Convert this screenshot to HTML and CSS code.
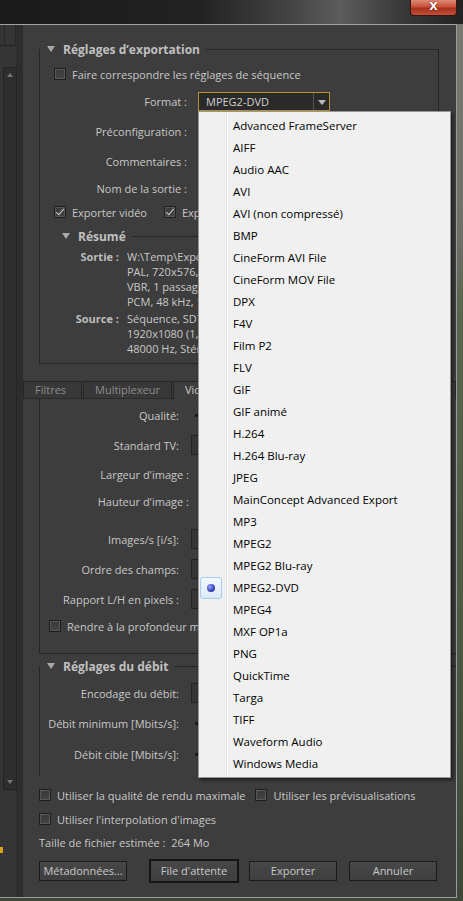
FILE: index.html
```html
<html>

<head>
  <title>Réglages d'exportation</title>
  <link rel="stylesheet" href="styles.css">
</head>

<body>
  <div class="desk">
    <div class="close">X</div>
  </div>

  <div class="win">
    <div class="side">
      <div class="side-cells"><span></span><span></span></div>
      <div class="side-scroll">
        <div class="arrow up"></div>
        <div class="track"></div>
        <div class="arrow down"></div>
      </div>
      <div class="side-foot"><span class="mark"></span></div>
    </div>

    <div class="main">
      <div class="export">
        <div class="group">
          <div class="group-title"><span class="tri"></span><b>Réglages d’exportation</b><span class="rule"></span></div>
          <div class="check-row first"><span class="box"></span>Faire correspondre les réglages de séquence</div>

          <div class="row format">
            <span class="lbl">Format :</span>
            <div class="select">
              <span>MPEG2-DVD</span>
              <span class="sel-arrow"></span>
              <ul class="popup">
                <li>Advanced FrameServer</li>
                <li>AIFF</li>
                <li>Audio AAC</li>
                <li>AVI</li>
                <li>AVI (non compressé)</li>
                <li>BMP</li>
                <li>CineForm AVI File</li>
                <li>CineForm MOV File</li>
                <li>DPX</li>
                <li>F4V</li>
                <li>Film P2</li>
                <li>FLV</li>
                <li>GIF</li>
                <li>GIF animé</li>
                <li>H.264</li>
                <li>H.264 Blu-ray</li>
                <li>JPEG</li>
                <li>MainConcept Advanced Export</li>
                <li>MP3</li>
                <li>MPEG2</li>
                <li>MPEG2 Blu-ray</li>
                <li class="on"><span class="radio"><i></i></span>MPEG2-DVD</li>
                <li>MPEG4</li>
                <li>MXF OP1a</li>
                <li>PNG</li>
                <li>QuickTime</li>
                <li>Targa</li>
                <li>TIFF</li>
                <li>Waveform Audio</li>
                <li>Windows Media</li>
              </ul>
            </div>
          </div>
          <div class="row preset"><span class="lbl">Préconfiguration :</span></div>
          <div class="row comments"><span class="lbl">Commentaires :</span></div>
          <div class="row outname"><span class="lbl">Nom de la sortie :</span></div>

          <div class="check-row exports">
            <span class="item"><span class="box on"></span>Exporter vidéo</span>
            <span class="item"><span class="box on"></span>Exporter audio</span>
          </div>

          <div class="sub-title"><span class="tri"></span><b>Résumé</b><span class="rule"></span></div>
          <div class="summary">
            <div class="sum-block">
              <b>Sortie :</b>
              <div>W:\Temp\Export.m2v<br>PAL, 720x576, 25 i/s<br>VBR, 1 passage<br>PCM, 48 kHz, 16 bits</div>
            </div>
            <div class="sum-block">
              <b>Source :</b>
              <div>Séquence, SD720<br>1920x1080 (1,0)<br>48000 Hz, Stéréo</div>
            </div>
          </div>
        </div>
      </div>

      <div class="tabs">
        <span class="tab">Filtres</span>
        <span class="tab">Multiplexeur</span>
        <span class="tab active">Vidéo</span>
      </div>

      <div class="tab-body">
        <div class="vgroup">
          <div class="row r-qual"><span class="lbl">Qualité:</span><span class="dot"></span></div>
          <div class="row r-tv"><span class="lbl">Standard TV:</span><span class="field"></span></div>
          <div class="row r-w"><span class="lbl wide">Largeur d'image :</span></div>
          <div class="row r-h"><span class="lbl wide">Hauteur d'image :</span></div>
          <div class="row r-fps"><span class="lbl">Images/s [i/s]:</span><span class="field"></span></div>
          <div class="row r-field"><span class="lbl">Ordre des champs:</span><span class="field"></span></div>
          <div class="row r-par"><span class="lbl">Rapport L/H en pixels :</span><span class="field"></span></div>
          <div class="check-row r-depth"><span class="box"></span>Rendre à la profondeur maximale</div>
        </div>
        <div class="dgroup">
          <div class="sub-title debit"><span class="tri"></span><b>Réglages du débit</b><span class="rule"></span></div>
          <div class="row r-enc"><span class="lbl">Encodage du débit:</span><span class="field"></span></div>
          <div class="row r-min"><span class="lbl">Débit minimum [Mbits/s]:</span><span class="dot"></span></div>
          <div class="row r-tgt"><span class="lbl">Débit cible [Mbits/s]:</span><span class="dot"></span></div>
        </div>
      </div>

      <div class="bottom">
        <div class="check-line first">
          <span class="item"><span class="box"></span>Utiliser la qualité de rendu maximale</span>
          <span class="item second"><span class="box"></span>Utiliser les prévisualisations</span>
        </div>
        <div class="check-line"><span class="item"><span class="box"></span>Utiliser l'interpolation d'images</span></div>
        <div class="size">Taille de fichier estimée :&nbsp; 264 Mo</div>
        <div class="buttons">
          <span class="btn">Métadonnées...</span>
          <span class="btn default">File d'attente</span>
          <span class="btn">Exporter</span>
          <span class="btn">Annuler</span>
        </div>
      </div>
    </div>
  </div>
</body>

</html>
```

FILE: styles.css
```css
body {
  margin: 0;
  width: 463px;
  height: 901px;
  overflow: hidden;
  font-family: "Open Sans", "DejaVu Sans", sans-serif;
  font-size: 11px;
  color: #c8c8c8;
  background: linear-gradient(180deg, #7a7a72 0, #6f6f68 240px, #5b6650 300px, #4d5a44 600px, #3e4738 901px);
}

.desk {
  height: 24px;
  background: linear-gradient(90deg, #1a1a1a 0, #222 200px, #444 290px, #5c5c5c 340px, #3a3a3a 400px, #222 463px);
  display: flex;
  justify-content: flex-end;
  padding-right: 6px;
}

.close {
  width: 45px;
  height: 15px;
  border: 1px solid #3a1410;
  border-top: none;
  border-radius: 0 0 4px 4px;
  background: linear-gradient(180deg, #e08a78 0, #c8523a 45%, #a8301c 55%, #c0503a 100%);
  color: #fff;
  font-family: "DejaVu Sans", sans-serif;
  font-weight: bold;
  font-size: 11px;
  line-height: 14px;
  text-align: center;
  text-shadow: 0 0 2px #501008;
}

.win {
  width: 456px;
  height: 872px;
  border-top: 1px solid #a4a4a4;
  border-right: 1px solid #9a9a9a;
  border-bottom: 1px solid #9a9a9a;
  background: #3d3d3d;
  display: flex;
}

/* colonne de gauche */
.side {
  width: 16px;
  background: #353535;
  border-right: 7px solid #2d2d2d;
  display: flex;
  flex-direction: column;
}

.side-cells {
  height: 20px;
  display: flex;
  border-bottom: 1px solid #262626;
}

.side-cells span {
  border-right: 1px solid #262626;
  width: 4px;
}

.side-cells span + span {
  width: 10px;
}

.side-scroll {
  margin: 21px 0 0 3px;
  width: 12px;
  height: 721px;
  background: #2e2e2e;
  border: 1px solid #242424;
  display: flex;
  flex-direction: column;
}

.side-scroll .track {
  flex: 1;
}

.arrow {
  height: 14px;
  position: relative;
}

.arrow::after {
  content: "";
  position: absolute;
  left: 3px;
  top: 5px;
  border: 3px solid transparent;
}

.arrow.up::after {
  border-bottom: 4px solid #777;
  top: 2px;
}

.arrow.down::after {
  border-top: 4px solid #777;
}

.side-foot {
  flex: 1;
  position: relative;
}

.mark {
  position: absolute;
  left: 0;
  top: 57px;
  width: 3px;
  height: 6px;
  background: #d8a020;
}

.main {
  flex: 1;
  min-width: 0;
  display: flex;
  flex-direction: column;
}

/* groupes */
.export {
  flex-shrink: 0;
  height: 330px;
  padding: 24px 17px 0 16px;
}

.group {
  display: flow-root;
  border-left: 1px solid #262626;
  border-right: 1px solid #262626;
  border-bottom: 1px solid #262626;
  height: 314px;
}

.group-title,
.sub-title {
  height: 16px;
  display: flex;
  align-items: center;
  margin-top: -8px;
}

.group-title b,
.sub-title b {
  color: #c0c0c0;
  font-size: 12px;
  padding-right: 6px;
}

.tri {
  width: 0;
  height: 0;
  border-left: 4px solid transparent;
  border-right: 4px solid transparent;
  border-top: 6px solid #a8a8a8;
  margin: 0 8px 0 7px;
}

.rule {
  flex: 1;
  border-top: 1px solid #262626;
}

.check-row {
  height: 18px;
  display: flex;
  align-items: center;
  padding-left: 14px;
  white-space: nowrap;
}

.check-row.first {
  margin-top: 8px;
}

.box {
  width: 10px;
  height: 10px;
  flex-shrink: 0;
  border: 1px solid #1e1e1e;
  background: linear-gradient(180deg, #3a3a3a, #444);
  box-shadow: inset 0 0 0 1px #585858;
  margin-right: 6px;
  position: relative;
}

.box.on::after {
  content: "";
  position: absolute;
  left: 3px;
  top: 0;
  width: 3px;
  height: 7px;
  border-right: 1px solid #d0d0d0;
  border-bottom: 1px solid #d0d0d0;
  transform: rotate(40deg);
}

.row {
  height: 20px;
  display: flex;
  align-items: center;
  flex-shrink: 0;
  white-space: nowrap;
}

.lbl {
  width: 147px;
  text-align: right;
  flex-shrink: 0;
}

.format {
  margin-top: 8px;
}

.preset {
  margin-top: 10px;
}

.comments {
  margin-top: 10px;
}

.outname {
  margin-top: 7px;
}

.select {
  margin-left: 11px;
  width: 123px;
  height: 17px;
  border: 1px solid #b8922e;
  background: #2a2a2a;
  display: flex;
  align-items: center;
  padding-left: 7px;
  position: relative;
  color: #d0d0d0;
}

.select > span:first-child {
  flex: 1;
}

.sel-arrow {
  width: 15px;
  height: 17px;
  border-left: 1px solid #555;
  position: relative;
}

.sel-arrow::after {
  content: "";
  position: absolute;
  left: 4px;
  top: 7px;
  border-left: 4px solid transparent;
  border-right: 4px solid transparent;
  border-top: 5px solid #bbb;
}

/* menu déroulant */
.popup {
  position: absolute;
  left: -1px;
  top: 18px;
  width: 251px;
  margin: 0;
  padding: 3px 0 2px;
  list-style: none;
  border: 1px solid #979797;
  background: linear-gradient(90deg, #f0f0f0 0, #f0f0f0 27px, #e2e3e3 27px, #e2e3e3 28px, #fff 28px, #fff 29px, #f0f0f0 29px);
  box-shadow: 2px 2px 3px rgba(0, 0, 0, 0.5);
  color: #000;
  font-size: 11.5px;
  z-index: 5;
}

.popup li {
  height: 22px;
  line-height: 22px;
  padding-left: 34px;
  position: relative;
}

.radio {
  position: absolute;
  left: 1px;
  top: 0;
  width: 20px;
  height: 20px;
  border: 1px solid #a8cbf0;
  border-radius: 3px;
  background: linear-gradient(180deg, #f2f8fe, #dceaf8);
}

.radio i {
  position: absolute;
  left: 6px;
  top: 6px;
  width: 8px;
  height: 8px;
  border-radius: 50%;
  background: radial-gradient(circle at 35% 35%, #9aa8ff 0, #3848b8 55%, #1c2470 100%);
}

.exports {
  margin-top: 5px;
}

.exports .item {
  display: flex;
  align-items: center;
  width: 110px;
}

.sub-title {
  margin-top: 7px;
  padding-left: 15px;
}

.summary {
  margin-top: 5px;
  line-height: 15px;
}

.sum-block {
  display: flex;
  margin-bottom: 2px;
  white-space: nowrap;
}

.sum-block b {
  width: 79px;
  text-align: right;
  padding-right: 8px;
  flex-shrink: 0;
  color: #bdbdbd;
}

/* onglets */
.tabs {
  flex-shrink: 0;
  height: 17px;
  display: flex;
  margin-top: 2px;
  border-bottom: 1px solid #2a2a2a;
}

.tab {
  border: 1px solid #262626;
  border-bottom: none;
  background: #383838;
  color: #8c8c8c;
  padding: 0 11px;
  line-height: 16px;
  margin-right: 1px;
}

.tab:first-child {
  width: 35px;
}

.tab.active {
  flex: 1;
  background: #3d3d3d;
  color: #c8c8c8;
  margin: 0 0 -1px;
}

.tab-body {
  flex-shrink: 0;
  height: 377px;
  overflow: hidden;
  padding-left: 16px;
}

.vgroup {
  display: flow-root;
  border-left: 1px solid #262626;
  border-bottom: 1px solid #262626;
  height: 254px;
}

.vgroup .lbl,
.dgroup .lbl {
  width: 139px;
}

.vgroup .lbl.wide {
  width: 149px;
}

.field {
  margin-left: 12px;
  width: 20px;
  height: 18px;
  border: 1px solid #222;
  background: #353535;
}

.dot {
  margin-left: 16px;
  width: 3px;
  height: 3px;
  background: #1a1a1a;
}

.r-qual {
  margin-top: 6px;
}

.r-tv {
  margin-top: 10px;
}

.r-w {
  margin-top: 9px;
}

.r-h {
  margin-top: 7px;
}

.r-fps {
  margin-top: 18px;
}

.r-field,
.r-par {
  margin-top: 10px;
}

.r-depth {
  margin-top: 8px;
  padding-left: 9px;
}

.dgroup {
  display: flow-root;
  margin-top: 12px;
  border-left: 1px solid #262626;
  height: 120px;
}

.sub-title.debit {
  margin-top: -8px;
  padding-left: 0;
}

.r-enc {
  margin-top: 9px;
}

.r-min {
  margin-top: 10px;
}

.r-tgt {
  margin-top: 11px;
}

/* bas de fenêtre */
.bottom {
  flex: 1;
  padding-left: 16px;
}

.check-line {
  height: 18px;
  display: flex;
  align-items: center;
  margin-top: 6px;
}

.check-line.first {
  margin-top: 10px;
}

.check-line .item {
  display: flex;
  align-items: center;
}

.check-line .item.second {
  margin-left: 10px;
}

.size {
  height: 18px;
  line-height: 18px;
  margin-top: 6px;
}

.buttons {
  display: flex;
  margin-top: 9px;
}

.btn {
  width: 86px;
  height: 18px;
  line-height: 18px;
  text-align: center;
  border: 1px solid #1c1c1c;
  background: linear-gradient(180deg, #474747, #3f3f3f);
  margin-right: 12px;
}

.btn.default {
  border: 2px solid #141414;
  margin: -2px 10px 0 10px;
  height: 20px;
  line-height: 20px;
}
```
